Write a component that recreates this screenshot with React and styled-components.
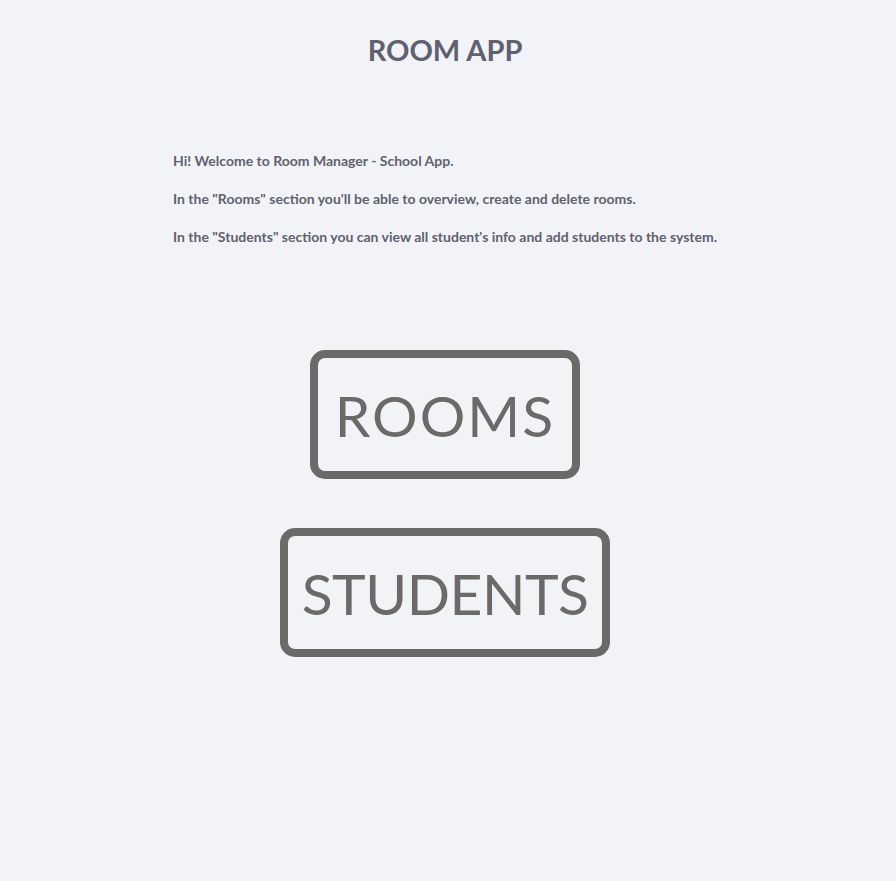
import React from "react";
import styled, { createGlobalStyle } from "styled-components";

const Global = createGlobalStyle`
  html, body { margin: 0; padding: 0; background: #f2f3f7; }
  body { font-family: "Lato", "Liberation Sans", sans-serif; }
`;

const Page = styled.div`
  width: 890px;
  min-height: 881px;
  display: flex;
  flex-direction: column;
  align-items: center;
  background: #f2f3f7;
`;

const Title = styled.h1`
  margin: 32px 0 0;
  font-size: 29px;
  font-weight: 700;
  color: #5f6170;
  line-height: 36px;
`;

const Intro = styled.div`
  margin-top: 84px;
  width: 544px;
  display: flex;
  flex-direction: column;
  gap: 20px;
`;

const Line = styled.p`
  margin: 0;
  font-size: 14px;
  font-weight: 700;
  line-height: 18px;
  color: #5f6170;
  white-space: nowrap;
`;

const Menu = styled.div`
  margin-top: 104px;
  display: flex;
  flex-direction: column;
  align-items: center;
  gap: 49px;
`;

const BigButton = styled.button`
  box-sizing: border-box;
  height: 129px;
  width: ${(p) => p.$w}px;
  border: 8px solid #6b6a69;
  border-radius: 15px;
  background: transparent;
  color: #6b6a69;
  font-family: "Lato", "Liberation Sans", sans-serif;
  font-size: 57px;
  font-weight: 400;
  letter-spacing: ${(p) => p.$ls}px;
  display: flex;
  align-items: center;
  justify-content: center;
  padding: 0;
  cursor: pointer;
`;

export default function App() {
  return (
    <>
      <Global />
      <Page>
        <Title>ROOM APP</Title>
        <Intro>
          <Line>Hi! Welcome to Room Manager - School App.</Line>
          <Line>In the "Rooms" section you'll be able to overview, create and delete rooms.</Line>
          <Line>In the "Students" section you can view all student's info and add students to the system.</Line>
        </Intro>
        <Menu>
          <BigButton $w={270} $ls={2}>ROOMS</BigButton>
          <BigButton $w={330} $ls={-0.5}>STUDENTS</BigButton>
        </Menu>
      </Page>
    </>
  );
}
